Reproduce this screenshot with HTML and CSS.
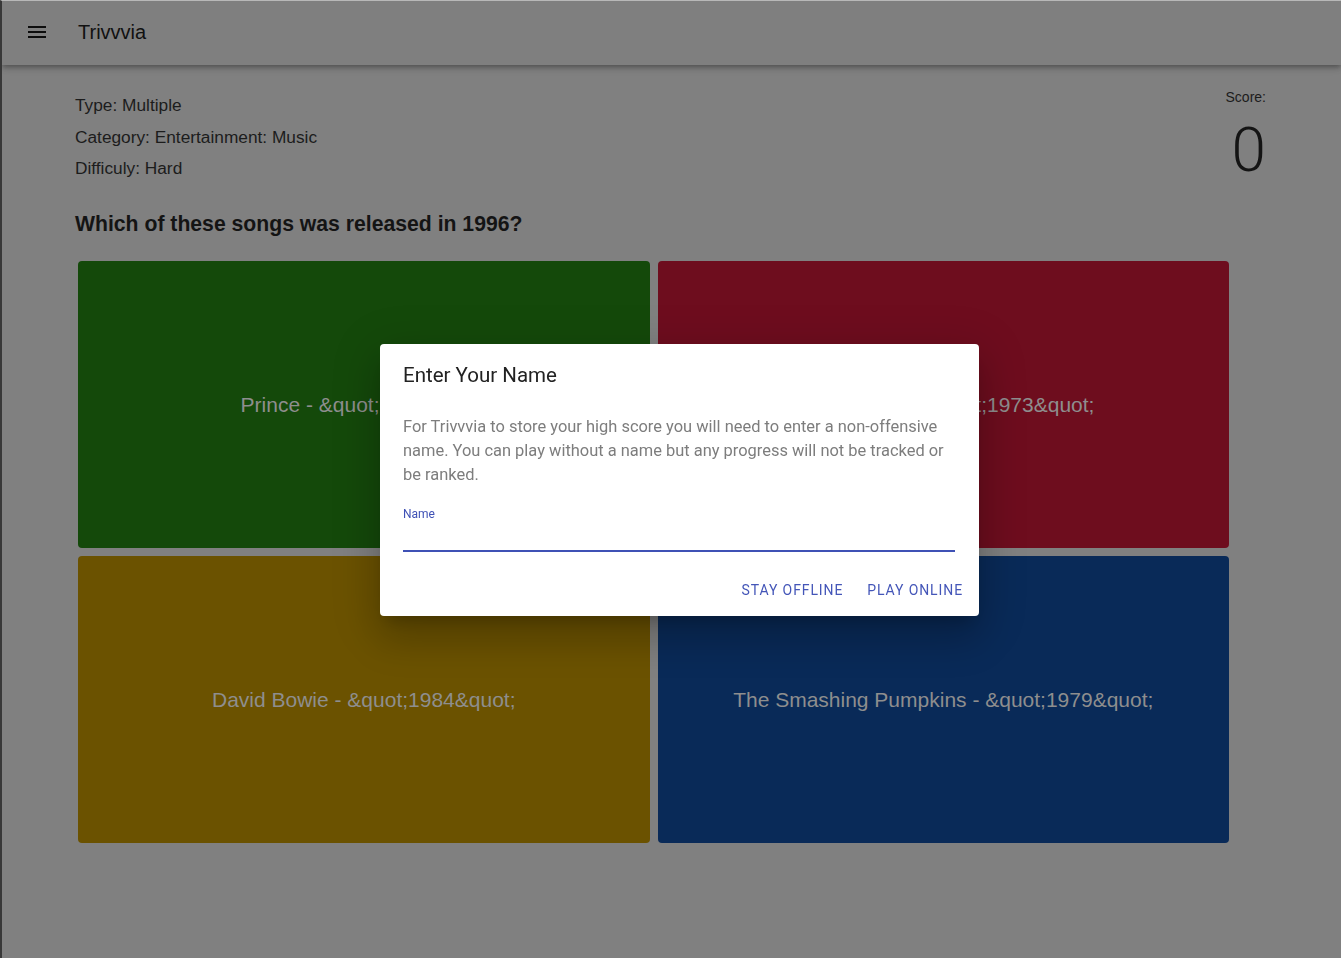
FILE: index.html
```html
<!DOCTYPE html>
<html lang="en">
<head>
<meta charset="utf-8">
<title>Trivvvia</title>
<link rel="stylesheet" href="styles.css">
</head>
<body>
<div class="app">
  <header class="appbar">
    <button class="menu-btn" aria-label="menu">
      <svg width="24" height="24" viewBox="0 0 24 24"><path d="M3 18h18v-2H3v2zm0-5h18v-2H3v2zm0-7v2h18V6H3z" fill="#0d0d0d"/></svg>
    </button>
    <div class="brand">Trivvvia</div>
  </header>
  <main class="main">
    <div class="top-row">
      <div class="info">
        <div class="info-line">Type: Multiple</div>
        <div class="info-line">Category: Entertainment: Music</div>
        <div class="info-line">Difficuly: Hard</div>
      </div>
      <div class="score">
        <div class="score-label">Score:</div>
        <div class="score-value">0</div>
      </div>
    </div>
    <h2 class="question">Which of these songs was released in 1996?</h2>
    <div class="answers">
      <div class="answer green">Prince - &amp;quot;1999&amp;quot;</div>
      <div class="answer red">James Blunt - &amp;quot;1973&amp;quot;</div>
      <div class="answer yellow">David Bowie - &amp;quot;1984&amp;quot;</div>
      <div class="answer blue">The Smashing Pumpkins - &amp;quot;1979&amp;quot;</div>
    </div>
  </main>
</div>
<div class="overlay">
  <div class="dialog">
    <h3 class="dialog-title">Enter Your Name</h3>
    <p class="dialog-text">For Trivvvia to store your high score you will need to enter a non-offensive name. You can play without a name but any progress will not be tracked or be ranked.</p>
    <label class="field">
      <span class="field-label">Name</span>
      <input class="field-input" type="text">
    </label>
    <div class="actions">
      <button class="action">Stay Offline</button>
      <button class="action">Play Online</button>
    </div>
  </div>
</div>
</body>
</html>
```
FILE: styles.css
```css
* { box-sizing: border-box; }
html, body { margin: 0; height: 100%; }
body {
  background: #808080;
  font-family: "Liberation Sans", Arial, sans-serif;
  border-left: 2px solid #383838;
  border-top: 1px solid #b8b8b8;
  overflow: hidden;
}
.app { min-height: 100%; }
.appbar {
  height: 64px;
  display: flex;
  align-items: center;
  padding-left: 23px;
  padding-bottom: 2px;
  background: #7f7f7f;
  box-shadow: 0 2px 4px -1px rgba(0,0,0,0.2), 0 4px 5px 0 rgba(0,0,0,0.14), 0 1px 10px 0 rgba(0,0,0,0.12);
  position: relative;
}
.menu-btn {
  border: 0; background: none; padding: 0; width: 24px; height: 24px;
  display: flex; margin-right: 29px;
}
.brand {
  font-size: 20px;
  color: #111;
}
.main {
  padding: 25px 75px 0 73px;
}
.top-row {
  display: flex;
  justify-content: space-between;
}
.info-line {
  font-size: 17.3px;
  line-height: 31.5px;
  color: #1c1c1c;
}
.score {
  text-align: right;
  margin-top: -2px;
}
.score-label {
  font-size: 14px;
  color: #1c1c1c;
  line-height: 18px;
}
.score-value {
  font-family: Roboto, "Liberation Sans", sans-serif;
  font-weight: 300;
  font-size: 62px;
  line-height: 70px;
  color: #141414;
  margin-top: 9px;
}
.question {
  margin: 26px 0 0;
  font-size: 21.2px;
  font-weight: bold;
  line-height: 26px;
  color: #141414;
}
.answers {
  margin: 24px 37px 0 3px;
  display: grid;
  grid-template-columns: 1fr 1fr;
  grid-auto-rows: 287px;
  gap: 8px;
}
.answer {
  border-radius: 4px;
  display: flex;
  align-items: center;
  justify-content: center;
  font-size: 21px;
  color: #8e8e8e;
}
.green { background: #14490a; }
.red { background: #6e0d1e; }
.yellow { background: #6b5200; }
.blue { background: #092a58; }

.overlay {
  position: fixed;
  inset: 0;
  display: flex;
  align-items: center;
  justify-content: center;
  padding-left: 18px;
  padding-top: 2px;
}
.dialog {
  width: 599px;
  background: #fff;
  border-radius: 4px;
  box-shadow: 0 11px 15px -7px rgba(0,0,0,0.2), 0 24px 38px 3px rgba(0,0,0,0.14), 0 9px 46px 8px rgba(0,0,0,0.12);
  font-family: Roboto, "Liberation Sans", sans-serif;
  padding: 0 8px 8px 0;
}
.dialog-title {
  margin: 0;
  padding: 18px 24px 0 23px;
  font-size: 20.5px;
  font-weight: 400;
  line-height: 26px;
  color: #222;
}
.dialog-text {
  margin: 0;
  padding: 27px 16px 0 23px;
  font-size: 16.45px;
  line-height: 24px;
  color: #7d7d7d;
}
.field {
  display: flex;
  flex-direction: column;
  margin: 20px 16px 0 23px;
}
.field-label {
  font-size: 12px;
  line-height: 14px;
  color: #3f51b5;
}
.field-input {
  border: 0;
  border-bottom: 2px solid #3f51b5;
  height: 28px;
  margin-top: 3px;
  outline: none;
  font: inherit;
  padding: 0;
}
.actions {
  display: flex;
  justify-content: flex-end;
  gap: 8px;
  margin-top: 20px;
}
.action {
  border: 0;
  background: none;
  font-family: Roboto, "Liberation Sans", sans-serif;
  font-size: 14px;
  font-weight: 400;
  text-transform: uppercase;
  letter-spacing: 0.9px;
  color: #4456b8;
  padding: 10px 8px;
  line-height: 16px;
  min-height: 36px;
  min-width: 64px;
}
```
